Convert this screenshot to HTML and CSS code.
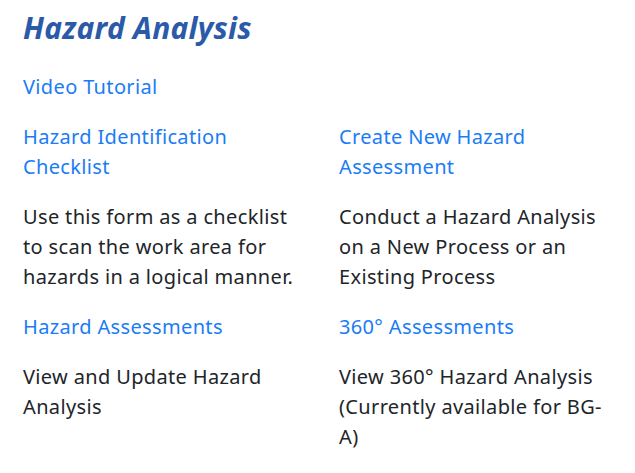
FILE: index.html
```html
<!DOCTYPE html>
<html lang="en">
<head>
  <meta charset="UTF-8">
  <meta name="viewport" content="width=device-width, initial-scale=1.0">
  <title>Hazard Analysis</title>
  <link rel="stylesheet" href="styles.css">
</head>
<body>

<div id="page">
  <h1 class="page-title">Hazard Analysis</h1>

  <p class="video"><a href="#">Video Tutorial</a></p>

  <div class="tools">
    <a class="tool-link" href="#">Hazard Identification Checklist</a>
    <a class="tool-link" href="#">Create New Hazard Assessment</a>
    <p class="tool-desc">Use this form as a checklist to scan the work area for hazards in a logical manner.</p>
    <p class="tool-desc">Conduct a Hazard Analysis on a New Process or an Existing Process</p>
    <a class="tool-link" href="#">Hazard Assessments</a>
    <a class="tool-link" href="#">360&deg; Assessments</a>
    <p class="tool-desc">View and Update Hazard Analysis</p>
    <p class="tool-desc">View 360&deg; Hazard Analysis (Currently available for BG-A)</p>
  </div>
</div>

</body>
</html>
```
FILE: styles.css
```css
body {
  font-family: 'Noto Sans', 'Open Sans', sans-serif;
  background-color: #fff;
  color: #212529;
  margin: 0;
}

#page {
  padding: 8px 23px;
}

.page-title {
  margin: 0 0 24px;
  font-size: 30px;
  line-height: 40px;
  font-weight: bold;
  font-style: italic;
  letter-spacing: 0.25px;
  color: #2b5aa8;
}

a {
  color: #1a7cf6;
  text-decoration: none;
}

.video {
  margin: 0 0 20px;
  font-size: 20px;
  line-height: 30px;
  letter-spacing: 0.35px;
}

.tools {
  display: grid;
  grid-template-columns: 276px 276px;
  column-gap: 40px;
  row-gap: 20px;
  font-size: 20px;
  line-height: 30px;
  letter-spacing: 0.35px;
}

.tool-desc {
  margin: 0;
}
```
